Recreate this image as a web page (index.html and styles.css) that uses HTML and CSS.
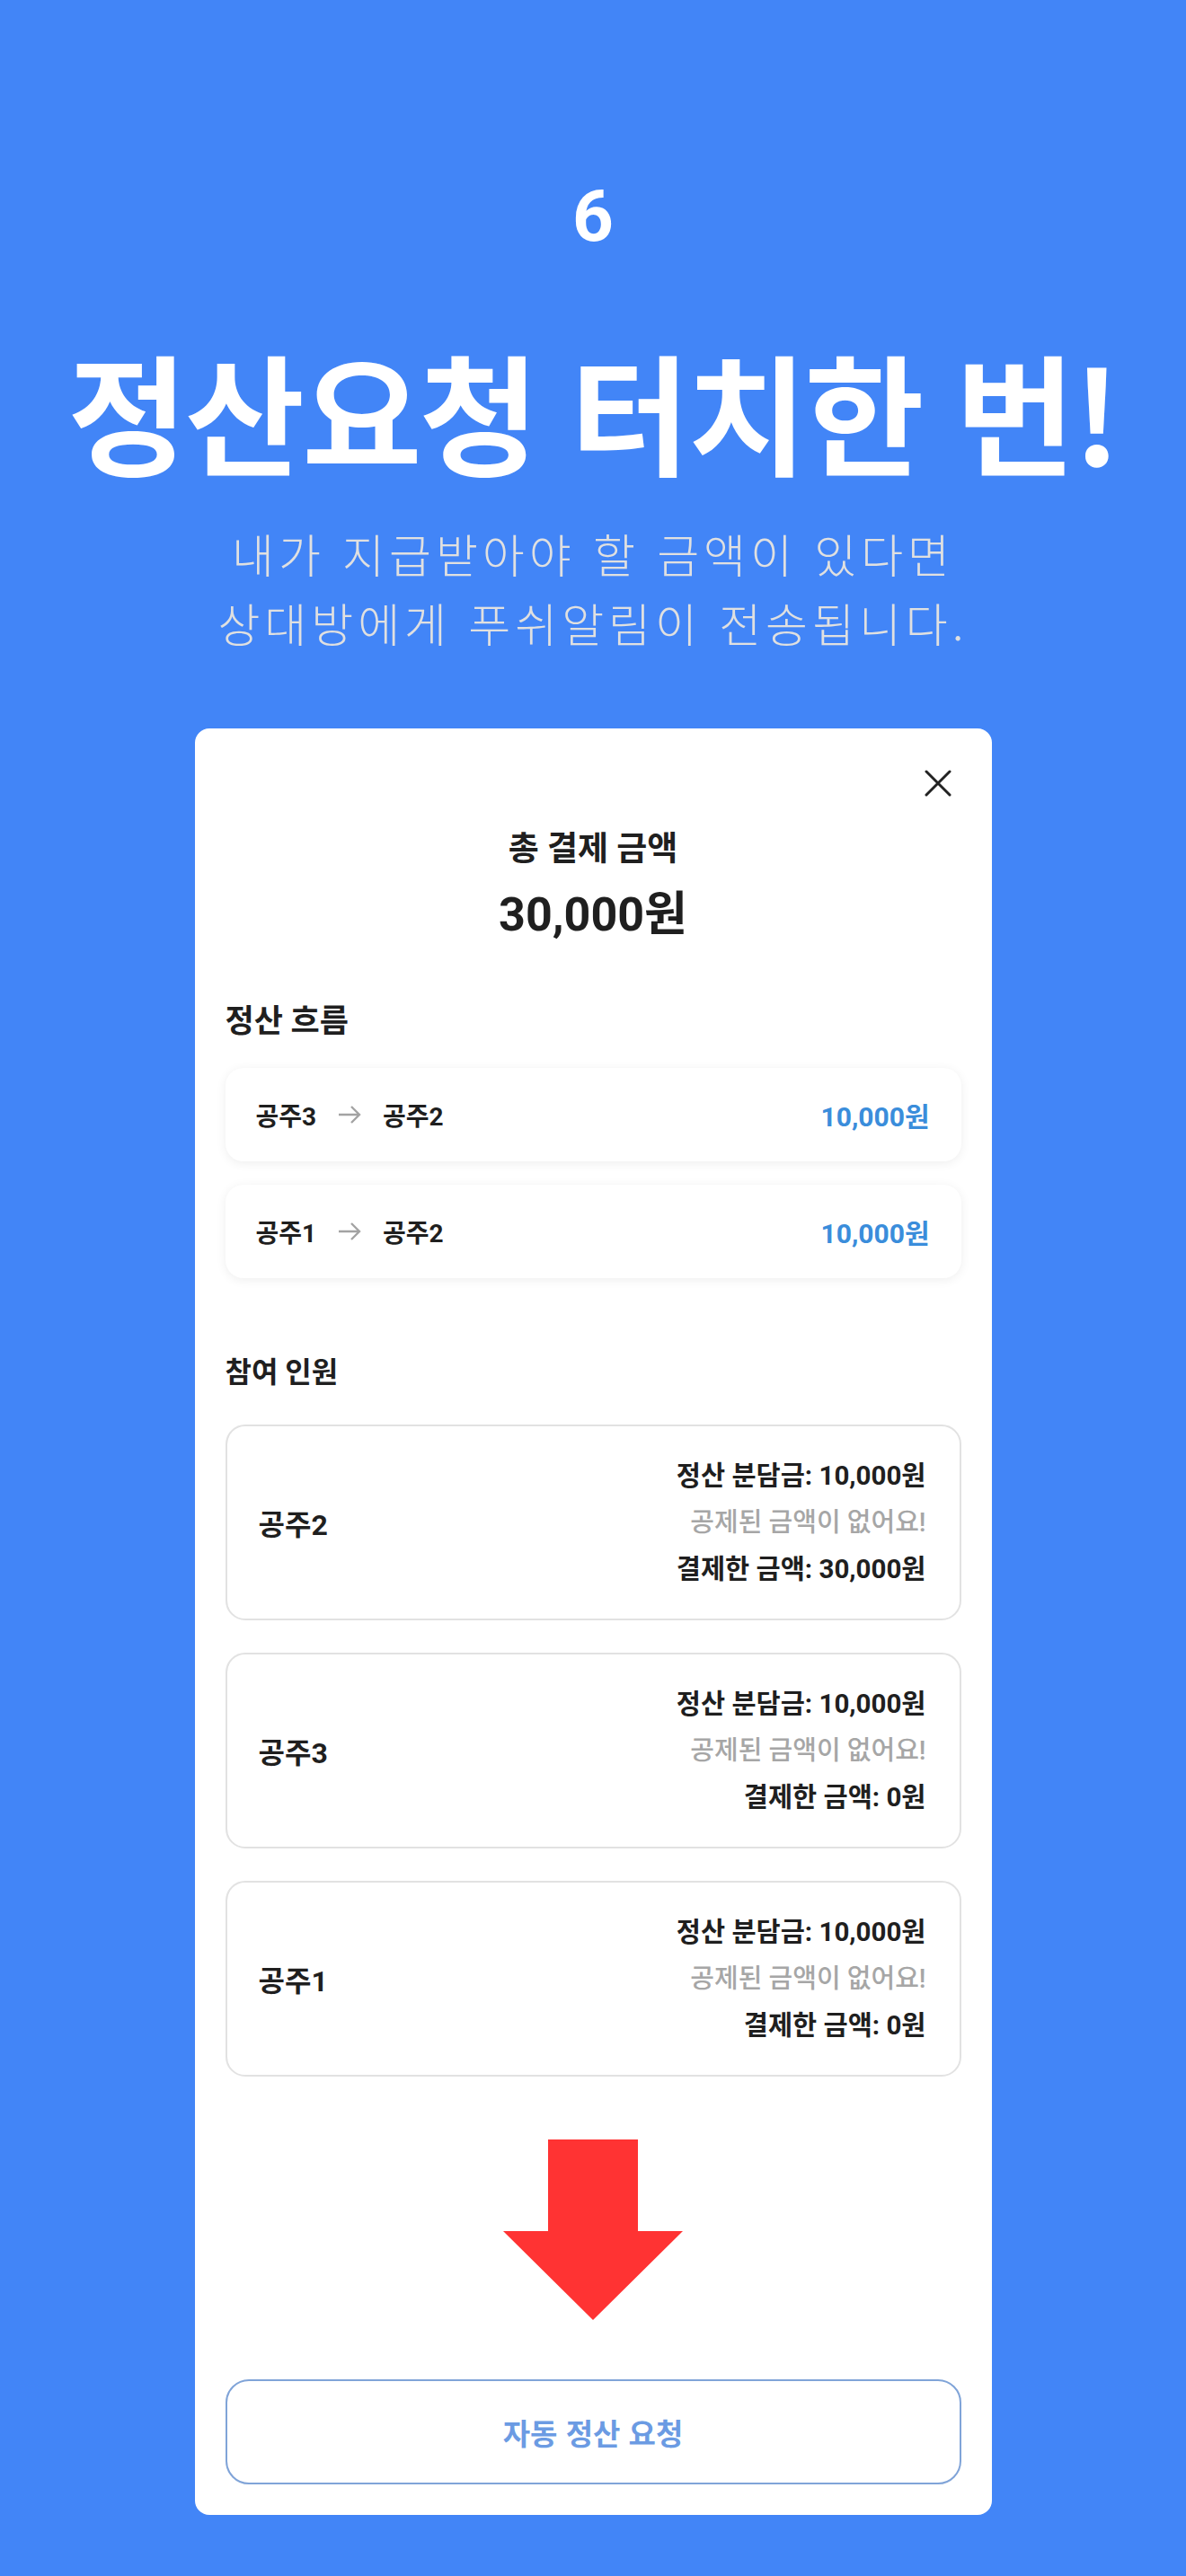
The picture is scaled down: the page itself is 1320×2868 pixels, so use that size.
FILE: index.html
```html
<!DOCTYPE html>
<html lang="ko">
<head>
    <meta charset="UTF-8">
    <meta name="viewport" content="width=device-width, initial-scale=1.0">
    <title>정산요청 터치한 번!</title>
    <link rel="stylesheet" href="styles.css">
</head>
<body>
    <div class="hero">
        <div class="step">6</div>
        <h1 class="title">정산요청 터치한 번!</h1>
        <p class="subtitle">내가 지급받아야 할 금액이 있다면<br>상대방에게 푸쉬알림이 전송됩니다.</p>
    </div>

    <div class="sheet">
        <div class="sheet-top">
            <svg class="close-icon" width="30" height="30" viewBox="0 0 30 30">
                <path d="M2 2 L28 28 M28 2 L2 28" stroke="#222" stroke-width="3" stroke-linecap="round"/>
            </svg>
        </div>

        <div class="total-label">총 결제 금액</div>
        <div class="total-amount">30,000원</div>

        <h2 class="section-title flow-title">정산 흐름</h2>
        <div class="flow-list">
            <div class="flow-row">
                <div class="flow-names">
                    <span>공주3</span>
                    <svg class="flow-arrow" width="26" height="22" viewBox="0 0 26 22">
                        <path d="M1 11 H24 M15 2 L24 11 L15 20" fill="none" stroke="#a3a3a3" stroke-width="2.4"/>
                    </svg>
                    <span>공주2</span>
                </div>
                <div class="flow-amount">10,000원</div>
            </div>
            <div class="flow-row">
                <div class="flow-names">
                    <span>공주1</span>
                    <svg class="flow-arrow" width="26" height="22" viewBox="0 0 26 22">
                        <path d="M1 11 H24 M15 2 L24 11 L15 20" fill="none" stroke="#a3a3a3" stroke-width="2.4"/>
                    </svg>
                    <span>공주2</span>
                </div>
                <div class="flow-amount">10,000원</div>
            </div>
        </div>

        <h2 class="section-title member-title">참여 인원</h2>
        <div class="member-list">
            <div class="member-card">
                <div class="member-name">공주2</div>
                <div class="member-info">
                    <div>정산 분담금: 10,000원</div>
                    <div class="muted">공제된 금액이 없어요!</div>
                    <div>결제한 금액: 30,000원</div>
                </div>
            </div>
            <div class="member-card">
                <div class="member-name">공주3</div>
                <div class="member-info">
                    <div>정산 분담금: 10,000원</div>
                    <div class="muted">공제된 금액이 없어요!</div>
                    <div>결제한 금액: 0원</div>
                </div>
            </div>
            <div class="member-card">
                <div class="member-name">공주1</div>
                <div class="member-info">
                    <div>정산 분담금: 10,000원</div>
                    <div class="muted">공제된 금액이 없어요!</div>
                    <div>결제한 금액: 0원</div>
                </div>
            </div>
        </div>

        <svg class="down-arrow" width="200" height="201" viewBox="0 0 200 201">
            <polygon points="50,0 150,0 150,102 200,102 100,201 0,102 50,102" fill="#ff3333"/>
        </svg>

        <button class="request-button">자동 정산 요청</button>
    </div>
</body>
</html>
```

FILE: styles.css
```css
body {
    margin: 0;
    background-color: #4285f7;
    font-family: Roboto, "Noto Sans CJK KR", sans-serif;
    min-height: 2868px;
}
.hero {
    padding-top: 201px;
    text-align: center;
    color: white;
}
.step {
    font-size: 80px;
    line-height: 80px;
    font-weight: 700;
}
.title {
    margin: 95px 0 0;
    font-family: "Noto Sans CJK KR", sans-serif;
    font-size: 145px;
    line-height: 160px;
    font-weight: 700;
    letter-spacing: -3px;
}
.subtitle {
    margin: 42px 0 0;
    font-family: "Noto Sans CJK KR", sans-serif;
    font-size: 51px;
    line-height: 77px;
    font-weight: 300;
    letter-spacing: 5px;
    color: #e0e0e0;
}
.sheet {
    width: 887px;
    margin: 79px auto 0;
    box-sizing: border-box;
    padding: 46px 34px 34px;
    background-color: #fff;
    border-radius: 16px;
    display: flex;
    flex-direction: column;
    color: #1f1f1f;
}
.sheet-top {
    display: flex;
    justify-content: flex-end;
    padding-right: 11px;
}
.close-icon {
    display: block;
}
.total-label {
    margin-top: 37px;
    text-align: center;
    font-size: 37px;
    line-height: 44px;
    font-weight: 700;
}
.total-amount {
    margin-top: 21px;
    text-align: center;
    font-size: 52px;
    line-height: 60px;
    font-weight: 700;
}
.section-title {
    margin: 0;
    font-weight: 700;
}
.flow-title {
    margin-top: 69px;
    font-size: 35px;
    line-height: 40px;
}
.flow-list {
    margin-top: 31px;
    display: flex;
    flex-direction: column;
    gap: 26px;
}
.flow-row {
    height: 104px;
    display: flex;
    align-items: center;
    justify-content: space-between;
    padding: 0 35px 0 34px;
    border-radius: 20px;
    background-color: #fff;
    box-shadow: 0 2px 12px rgba(0, 0, 0, 0.07);
    font-size: 28px;
    font-weight: 700;
}
.flow-names {
    display: flex;
    align-items: center;
}
.flow-arrow {
    margin: 0 24px;
}
.flow-amount {
    font-size: 30px;
    color: #3a8ddb;
}
.member-title {
    margin-top: 86px;
    font-size: 32px;
    line-height: 38px;
}
.member-list {
    margin-top: 39px;
    display: flex;
    flex-direction: column;
    gap: 36px;
}
.member-card {
    height: 218px;
    box-sizing: border-box;
    display: flex;
    align-items: center;
    justify-content: space-between;
    padding: 0 37px 0 35px;
    border: 2px solid #e2e2e2;
    border-radius: 22px;
}
.member-name {
    font-size: 32px;
    font-weight: 700;
}
.member-info {
    text-align: right;
    font-size: 29.5px;
    line-height: 52px;
    font-weight: 700;
}
.muted {
    font-size: 29px;
    color: #a6a6a6;
    font-weight: 500;
}
.down-arrow {
    display: block;
    margin: 70px auto 0;
}
.request-button {
    margin-top: 66px;
    height: 117px;
    background-color: #fff;
    border: 2px solid #80a4d8;
    border-radius: 26px;
    font-family: "Noto Sans CJK KR", sans-serif;
    font-size: 33px;
    font-weight: 700;
    color: #6b9be3;
    cursor: pointer;
}
```
